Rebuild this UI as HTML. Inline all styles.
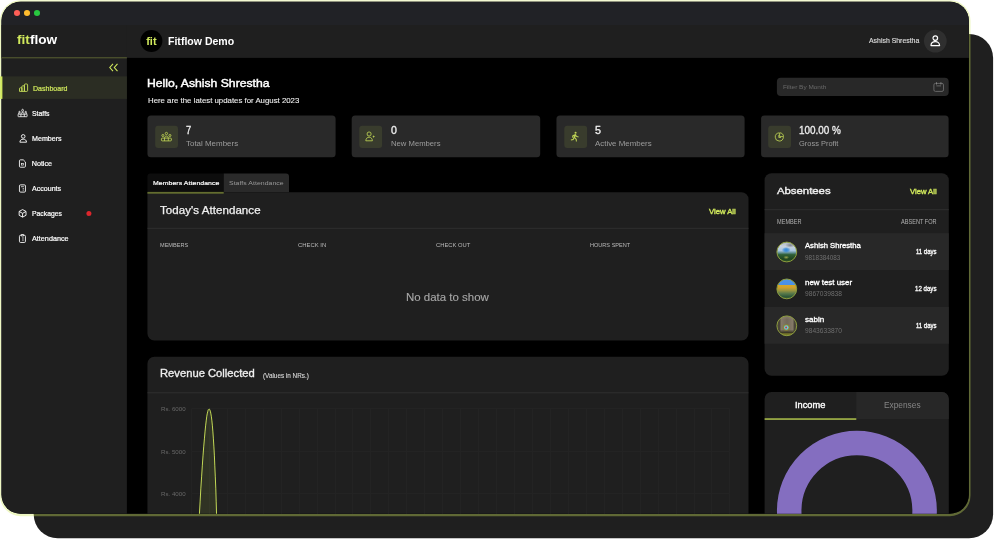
<!DOCTYPE html>
<html lang="en"><head><meta charset="utf-8"><title>Fitflow Demo</title>
<style>
*{box-sizing:border-box;margin:0;padding:0}
html,body{width:994px;height:539px;overflow:hidden;background:#fff}
body{position:relative;font-family:"Liberation Sans",sans-serif}
#art{position:absolute;left:0;top:0;display:block}
.t{position:absolute;white-space:nowrap;line-height:1;display:block;transform-origin:0 50%}
#texts{position:absolute;left:0;top:0;width:969px;height:514px;overflow:hidden;will-change:transform}

</style></head>
<body>
<svg id="art" width="994" height="539" viewBox="0 0 994 539" fill="none">
<defs>
<clipPath id="wc"><rect x="1.50" y="1.70" width="967.40" height="512.10" rx="19.20"/></clipPath>
<linearGradient id="a1" x1="0" y1="0" x2="0" y2="1"><stop offset="0" stop-color="#a9b0ba"/><stop offset=".24" stop-color="#c9d2dc"/><stop offset=".44" stop-color="#a8c6e0"/><stop offset=".54" stop-color="#5f8e90"/><stop offset=".62" stop-color="#2f5f36"/><stop offset=".82" stop-color="#1f4420"/><stop offset="1" stop-color="#3a6228"/></linearGradient>
<radialGradient id="a1b"><stop offset="0" stop-color="#2e86d8"/><stop offset=".5" stop-color="#2e86d8" stop-opacity=".7"/><stop offset="1" stop-color="#2e86d8" stop-opacity="0"/></radialGradient>
<radialGradient id="a1c"><stop offset="0" stop-color="#7d828c"/><stop offset="1" stop-color="#7d828c" stop-opacity="0"/></radialGradient>
<radialGradient id="a1d"><stop offset="0" stop-color="#96a24a"/><stop offset="1" stop-color="#96a24a" stop-opacity="0"/></radialGradient>
<linearGradient id="a2" x1="0" y1="0" x2="0" y2="1"><stop offset="0" stop-color="#4c93e9"/><stop offset=".29" stop-color="#4a90e6"/><stop offset=".32" stop-color="#d6a82a"/><stop offset=".44" stop-color="#cfa02c"/><stop offset=".58" stop-color="#9a9440"/><stop offset=".72" stop-color="#5a7a4a"/><stop offset=".88" stop-color="#2e583a"/><stop offset="1" stop-color="#44602c"/></linearGradient>
<linearGradient id="a3" x1="0" y1="0" x2="1" y2="0"><stop offset="0" stop-color="#4b4639"/><stop offset=".16" stop-color="#4b4639"/><stop offset=".24" stop-color="#857a68"/><stop offset=".5" stop-color="#73695a"/><stop offset=".76" stop-color="#857a68"/><stop offset=".84" stop-color="#4b4639"/><stop offset="1" stop-color="#4b4639"/></linearGradient>
<linearGradient id="a3b" x1="0" y1="0" x2="0" y2="1"><stop offset="0" stop-color="#a09482" stop-opacity=".5"/><stop offset=".2" stop-color="#a09482" stop-opacity="0"/><stop offset=".66" stop-color="#34321e" stop-opacity="0"/><stop offset=".8" stop-color="#34321e" stop-opacity=".9"/><stop offset=".86" stop-color="#7e7e2a"/><stop offset=".93" stop-color="#6a6a26"/><stop offset="1" stop-color="#3a3820"/></linearGradient>
<clipPath id="c1"><circle cx="786.8" cy="252" r="9.9"/></clipPath><clipPath id="c2"><circle cx="786.8" cy="288.9" r="9.9"/></clipPath><clipPath id="c3"><circle cx="786.8" cy="325.8" r="9.9"/></clipPath>
</defs>
<rect x="33.70" y="34.00" width="959.40" height="504.35" rx="24.00" fill="#1f1f1f"/>
<path fill-rule="evenodd" fill="#d0e85c" fill-opacity=".37" d="M20.60 0.20H949.90a20.60 20.60 0 0 1 20.60 20.60V495.55a20.60 20.60 0 0 1 -20.60 20.60H20.60a20.60 20.60 0 0 1 -20.60 -20.60V20.80a20.60 20.60 0 0 1 20.60 -20.60ZM20.70 1.70H949.70a19.20 19.20 0 0 1 19.20 19.20V494.60a19.20 19.20 0 0 1 -19.20 19.20H20.70a19.20 19.20 0 0 1 -19.20 -19.20V20.90a19.20 19.20 0 0 1 19.20 -19.20Z"/>
<g clip-path="url(#wc)">
<rect x="0.00" y="0.00" width="971.00" height="517.00" rx="0.00" fill="#000"/>
<rect x="0.00" y="0.00" width="971.00" height="25.00" rx="0.00" fill="#212226"/>
<rect x="0.00" y="25.00" width="971.00" height="32.90" rx="0.00" fill="#1f1f1f"/>
<rect x="0.00" y="25.00" width="126.90" height="492.00" rx="0.00" fill="#1f1f1f"/>
<rect x="0.00" y="57.30" width="126.90" height="1.00" rx="0.00" fill="#5a6133"/>
<rect x="0.00" y="76.40" width="126.90" height="22.50" rx="0.00" fill="#2b2d23"/>
<circle cx="17.0" cy="13" r="3.05" fill="#fe5f57"/>
<circle cx="27.0" cy="13" r="3.05" fill="#febc2e"/>
<circle cx="37.0" cy="13" r="3.05" fill="#28c840"/>
<circle cx="151.4" cy="41.05" r="11" fill="#000"/>
<circle cx="935.3" cy="41.1" r="11.4" fill="#2f2f2f"/>
<g transform="translate(929.80 34.80)" stroke="#fff" stroke-width="1.200"><circle cx="5.5" cy="3.3" r="2.3"/><path d="M1.2 10.8c0-2.600 1.900-4 4.300-4s4.300 1.400 4.300 4z" stroke-linejoin="round"/></g>
<g transform="translate(109.00 63.40)" stroke="#d0e85c" stroke-width="1.100"><path d="M4 .5L.8 4.100 4 7.700M8.500 .5L5.300 4.100 8.500 7.700"/></g>
<g transform="translate(19.00 83.50)" stroke="#d0e85c" stroke-width=".85" stroke-linejoin="round"><path d="M.5 7.900V5.100c0-.5.300-.8.800-.8h1.600v3.600zM2.900 7.900V3.100c0-.5.300-.8.800-.8h1.700v5.600zM5.400 7.900V1.300c0-.5.300-.8.800-.8h1.600c.5 0 .8.300.8.800v5.800c0 .5-.3.800-.8.800z"/></g>
<g transform="translate(17.60 108.80)" stroke="#fff" stroke-width=".8"><ellipse cx="5" cy="1.700" rx=".85" ry="1.250"/><circle cx="1.900" cy="3.300" r=".75"/><circle cx="8.100" cy="3.300" r=".75"/><path d="M3.500 5.300c0-1.100.6-1.700 1.500-1.700s1.500.6 1.500 1.700M.6 5.300c0-.6.5-1 1.300-1M9.400 5.300c0-.6-.5-1-1.300-1"/><rect x=".5" y="5.400" width="9" height="2.500" rx=".4"/><path d="M3.300 5.400v2.500M6.700 5.400v2.500"/></g>
<g transform="translate(19.20 134.00)" stroke="#fff" stroke-width=".9"><circle cx="4" cy="2.400" r="1.800"/><path d="M.7 8.200c0-2 1.400-3 3.300-3s3.300 1 3.300 3z" stroke-linejoin="round"/></g>
<g transform="translate(18.90 159.30) scale(0.910 0.930)" stroke="#fff" stroke-width=".95"><path d="M1.600.6h3.200l2.400 2.300v4.600c0 .6-.4 1-1 1H1.600c-.6 0-1-.4-1-1V1.600c0-.6.400-1 1-1z"/><rect x="2.700" y="4.400" width="2.200" height="1.800" stroke-width=".7"/></g>
<g transform="translate(18.90 184.30) scale(0.910 0.930)" stroke="#fff" stroke-width=".95"><rect x=".6" y=".6" width="6.600" height="7.800" rx="1.200"/><path d="M2.300 2.600h3.200M4.100 4.600h1.400M4.100 6.200h1.400" stroke-width=".8"/></g>
<g transform="translate(18.40 209.00) scale(0.930 0.970)" stroke="#fff" stroke-width=".95" stroke-linejoin="round"><path d="M4.500.6L8.200 2.500v4L4.500 8.400.8 6.500v-4z"/><path d="M.9 2.600L4.500 4.500l3.600-1.900M4.500 4.500v3.800"/></g>
<g transform="translate(18.90 233.90) scale(0.910 0.930)" stroke="#fff" stroke-width=".95"><rect x=".6" y="1.500" width="6.600" height="7.700" rx="1.200"/><path d="M2.600.7h2.600v1.500H2.600z" fill="#1f1f1f"/><path d="M3.400 4.400h2M3.400 6.600h2" stroke-width=".8"/></g>
<circle cx="88.9" cy="213.5" r="2.500" fill="#dc262c"/>
<rect x="776.90" y="77.70" width="171.80" height="18.30" rx="4.00" fill="#282828"/>
<g transform="translate(933.30 82.00)" stroke="#6c6c6c" stroke-width=".9"><rect x=".6" y="1.400" width="9.600" height="8" rx="1.500"/><path d="M3.200 .3v2.200M7.600 .3v2.200" stroke="#8a8a8a"/><path d="M3 3.900h4.800"/></g>
<rect x="147.45" y="115.55" width="188.15" height="41.65" rx="3.50" fill="#292929"/>
<rect x="351.70" y="115.55" width="188.50" height="41.65" rx="3.50" fill="#292929"/>
<rect x="556.45" y="115.55" width="188.15" height="41.65" rx="3.50" fill="#292929"/>
<rect x="761.10" y="115.55" width="187.50" height="41.65" rx="3.50" fill="#292929"/>
<rect x="155.20" y="125.75" width="22.80" height="22.20" rx="3.00" fill="#393c2d"/>
<rect x="359.30" y="125.75" width="22.80" height="22.20" rx="3.00" fill="#393c2d"/>
<rect x="564.30" y="125.75" width="22.80" height="22.20" rx="3.00" fill="#393c2d"/>
<rect x="768.20" y="125.75" width="22.80" height="22.20" rx="3.00" fill="#393c2d"/>
<g transform="translate(160.90 131.80)" stroke="#bdd254" stroke-width=".85"><circle cx="5.500" cy="1.700" r="1.150"/><circle cx="2" cy="3.700" r="1.050"/><circle cx="9" cy="3.700" r="1.050"/><path d="M3.700 6.300c0-1.300.7-2 1.800-2s1.800.7 1.800 2"/><rect x=".5" y="6.300" width="10" height="2.800" rx=".9"/><path d="M3.600 6.300v2.800M7.400 6.300v2.800"/></g>
<g transform="translate(365.30 131.40)" stroke="#bdd254" stroke-width=".85"><circle cx="3.800" cy="2.600" r="2.050"/><path d="M.5 9.400c.1-2.300 1.500-3.600 3.300-3.600s3.200 1.300 3.300 3.600z" stroke-linejoin="round"/><path d="M8.400 3.500c.2 1.100.6 1.500 1.700 1.700-1.100.2-1.500.6-1.700 1.700-.2-1.100-.6-1.500-1.700-1.700 1.100-.2 1.500-.6 1.700-1.700z" fill="#bdd254" stroke="none"/></g>
<g transform="translate(570.60 131.50)" fill="#bdd254"><circle cx="5" cy="1.200" r="1.050"/><path d="M1.900 3.800L4.300 2.700c.5-.2 1 0 1.300.5l.6 1.200 1.900.6-.3.900-2.300-.7-.4-.7-.5 1.600 1.500 1.300.2 2.500h-1l-.2-2-1.500-1.200-.6 1.700-2.600.5-.2-.9 2.100-.4.900-3.100-.8.400-.2 1.300-.9-.1z"/></g>
<g transform="translate(774.50 131.90)" stroke="#bdd254" stroke-width=".85"><path d="M4.200 1A4.100 4.100 0 1 0 8.900 5.600" stroke-linecap="round"/><path d="M5.100 .9A3.700 3.700 0 0 1 9 4.700H5.100z" stroke-linejoin="round"/><path d="M4.300 3v2.600h2.200" stroke-width=".8"/></g>
<path d="M150.45 173.40H223.70V193.80H147.45V176.40a3.00 3.00 0 0 1 3.00 -3.00Z" fill="#0d0d0d"/>
<path d="M223.70 173.40H286.00a3.00 3.00 0 0 1 3.00 3.00V192.30H223.70V173.40Z" fill="#2a2a2a"/>
<path d="M147.45 192.20H741.50a7.00 7.00 0 0 1 7.00 7.00V333.45a7.00 7.00 0 0 1 -7.00 7.00H154.45a7.00 7.00 0 0 1 -7.00 -7.00V192.20Z" fill="#1f1f1f"/>
<rect x="147.45" y="191.90" width="76.25" height="1.80" rx="0.00" fill="#636d2f"/>
<rect x="147.45" y="227.80" width="601.05" height="1.00" rx="0.00" fill="#2f2f2f"/>
<path d="M154.45 356.80H741.50a7.00 7.00 0 0 1 7.00 7.00V560.00H147.45V363.80a7.00 7.00 0 0 1 7.00 -7.00Z" fill="#1f1f1f"/>
<rect x="147.45" y="392.30" width="601.05" height="1.00" rx="0.00" fill="#2f2f2f"/>
<path d="M191.5 409V520M209.5 409V520M227.5 409V520M245.5 409V520M263.5 409V520M281.5 409V520M299.5 409V520M317.5 409V520M335.5 409V520M352.5 409V520M370.5 409V520M388.5 409V520M406.5 409V520M424.5 409V520M442.5 409V520M460.5 409V520M478.5 409V520M496.5 409V520M514.5 409V520M532.5 409V520M550.5 409V520M568.5 409V520M586.5 409V520M604.5 409V520M622.5 409V520M640.5 409V520M658.5 409V520M676.5 409V520M694.5 409V520M711.5 409V520M729.5 409V520M191.4 408.5H729.9M191.4 451.5H729.9M191.4 493.5H729.9" stroke="#232323" stroke-width="1"/>
<path d="M198.6 528.9 199.3 515.9 200.1 501.9 200.8 488.9 201.6 476.9 202.3 465.9 203.0 455.9 203.7 446.9 204.4 438.9 205.0 431.9 205.6 425.9 206.2 420.9 206.7 416.9 207.2 413.9 207.7 411.9 207.9 410.9 208.2 409.9 208.5 409.4 209.0 408.9 209.6 409.4 209.9 409.9 210.2 410.9 210.5 411.9 210.9 413.9 211.4 416.9 211.9 420.9 212.4 425.9 212.9 431.9 213.4 438.9 213.9 446.9 214.4 455.9 214.8 465.9 215.3 476.9 215.8 488.9 216.2 501.9 216.6 515.9 217.0 528.9" fill="#d0e85c" fill-opacity=".1" stroke="#c2d856" stroke-width="1" stroke-linejoin="round"/>
<rect x="764.60" y="173.20" width="184.20" height="202.60" rx="7.00" fill="#1f1f1f"/>
<rect x="764.60" y="209.20" width="184.20" height="1.00" rx="0.00" fill="#2f2f2f"/>
<rect x="764.60" y="233.20" width="184.20" height="36.85" rx="0.00" fill="#282828"/>
<rect x="764.60" y="306.90" width="184.20" height="36.85" rx="0.00" fill="#282828"/>
<g clip-path="url(#c1)"><rect x="776" y="241" width="22" height="22" fill="url(#a1)"/><ellipse cx="786.2" cy="250" rx="4.500" ry="3" fill="url(#a1b)"/><ellipse cx="790.2" cy="245.2" rx="5" ry="2.500" fill="url(#a1c)"/><ellipse cx="786.2" cy="257.4" rx="3" ry="1.800" fill="url(#a1d)"/></g>
<g clip-path="url(#c2)"><rect x="776" y="278.700" width="22" height="20.400" fill="url(#a2)"/></g>
<g clip-path="url(#c3)"><rect x="776" y="315" width="22" height="22" fill="url(#a3)"/><rect x="776" y="315" width="22" height="22" fill="url(#a3b)"/><circle cx="786.300" cy="327.500" r="3.300" fill="#8c8632"/><circle cx="786.300" cy="327.500" r="2.300" fill="#70c8da"/><circle cx="786.100" cy="327.500" r=".9" fill="#dc3030"/></g>
<circle cx="786.800" cy="252.0" r="9.900" stroke="#8d9d3e" stroke-width="1"/>
<circle cx="786.800" cy="288.9" r="9.900" stroke="#8d9d3e" stroke-width="1"/>
<circle cx="786.800" cy="325.8" r="9.900" stroke="#8d9d3e" stroke-width="1"/>
<path d="M771.60 392.00H941.80a7.00 7.00 0 0 1 7.00 7.00V560.00H764.60V399.00a7.00 7.00 0 0 1 7.00 -7.00Z" fill="#1f1f1f"/>
<path d="M856.30 392.00H941.80a7.00 7.00 0 0 1 7.00 7.00V419.00H856.30V392.00Z" fill="#272727"/>
<rect x="764.60" y="418.30" width="91.70" height="1.50" rx="0.00" fill="#aec24c"/>
<circle cx="856.900" cy="510.800" r="67.700" stroke="#846ec0" stroke-width="24.500"/>
</g>
<rect x="0.20" y="76.40" width="2.20" height="22.50" rx="0.00" fill="#d0e85c"/>
</svg>

<div id="texts">
<span class="t" style="left:16.6px;top:33.0px;font-size:13.6px;font-weight:700;color:#fff;transform:scaleX(1.004);"><b style="color:#d0e85c;font-weight:inherit">fit</b>flow</span>
<span class="t" style="left:146.2px;top:36.0px;font-size:11.0px;font-weight:700;color:#d0e85c;">fit</span>
<span class="t" style="left:167.9px;top:36.0px;font-size:10.5px;font-weight:700;color:#fff;transform:scaleX(1.004);">Fitflow Demo</span>
<span class="t" style="left:869.3px;top:38.0px;font-size:6.5px;font-weight:400;color:#dcdcdc;transform:scaleX(1.062);-webkit-text-stroke:0.15px #dcdcdc;">Ashish Shrestha</span>
<span class="t" style="left:32.8px;top:85.0px;font-size:7.2px;font-weight:400;color:#d0e85c;transform:scaleX(0.978);-webkit-text-stroke:0.20px #d0e85c;">Dashboard</span>
<span class="t" style="left:31.5px;top:110.0px;font-size:7.2px;font-weight:400;color:#fff;transform:scaleX(0.959);-webkit-text-stroke:0.20px #fff;">Staffs</span>
<span class="t" style="left:31.5px;top:135.0px;font-size:7.2px;font-weight:400;color:#fff;transform:scaleX(0.991);-webkit-text-stroke:0.20px #fff;">Members</span>
<span class="t" style="left:31.7px;top:160.0px;font-size:7.2px;font-weight:400;color:#fff;-webkit-text-stroke:0.20px #fff;">Notice</span>
<span class="t" style="left:31.5px;top:185.0px;font-size:7.2px;font-weight:400;color:#fff;transform:scaleX(0.984);-webkit-text-stroke:0.20px #fff;">Accounts</span>
<span class="t" style="left:31.7px;top:210.0px;font-size:7.2px;font-weight:400;color:#fff;transform:scaleX(0.947);-webkit-text-stroke:0.20px #fff;">Packages</span>
<span class="t" style="left:31.5px;top:235.0px;font-size:7.2px;font-weight:400;color:#fff;transform:scaleX(1.006);-webkit-text-stroke:0.20px #fff;">Attendance</span>
<span class="t" style="left:146.9px;top:78.0px;font-size:10.7px;font-weight:400;color:#fff;transform:scaleX(1.139);-webkit-text-stroke:0.42px #fff;">Hello, Ashish Shrestha</span>
<span class="t" style="left:147.7px;top:98.0px;font-size:6.9px;font-weight:400;color:#ececec;transform:scaleX(1.135);-webkit-text-stroke:0.10px #ececec;">Here are the latest updates for August 2023</span>
<span class="t" style="left:782.7px;top:84.0px;font-size:6.0px;font-weight:400;color:#6a6a6a;transform:scaleX(1.073);">Filter By Month</span>
<span class="t" style="left:152.5px;top:180.0px;font-size:6.0px;font-weight:400;color:#fff;letter-spacing:0.06px;transform:scaleX(1.150);-webkit-text-stroke:0.18px #fff;">Members Attendance</span>
<span class="t" style="left:229.1px;top:180.0px;font-size:6.0px;font-weight:400;color:#9a9a9a;letter-spacing:0.04px;transform:scaleX(1.150);">Staffs Attendance</span>
<span class="t" style="left:160.1px;top:206.0px;font-size:10.0px;font-weight:400;color:#f0f0f0;letter-spacing:0.06px;transform:scaleX(1.150);-webkit-text-stroke:0.25px #f0f0f0;">Today's Attendance</span>
<span class="t" style="left:709.3px;top:209.0px;font-size:7.1px;font-weight:400;color:#d0e85c;transform:scaleX(1.084);-webkit-text-stroke:0.35px #d0e85c;">View All</span>
<span class="t" style="left:159.7px;top:243.0px;font-size:5.9px;font-weight:400;color:#bababa;transform:scaleX(0.946);">MEMBERS</span>
<span class="t" style="left:298.0px;top:243.0px;font-size:5.9px;font-weight:400;color:#bababa;">CHECK IN</span>
<span class="t" style="left:435.7px;top:243.0px;font-size:5.9px;font-weight:400;color:#bababa;transform:scaleX(0.986);">CHECK OUT</span>
<span class="t" style="left:590.2px;top:243.0px;font-size:5.9px;font-weight:400;color:#bababa;transform:scaleX(0.944);">HOURS SPENT</span>
<span class="t" style="left:406.4px;top:293.0px;font-size:10.0px;font-weight:400;color:#a8a8a8;transform:scaleX(1.147);-webkit-text-stroke:0.10px #a8a8a8;">No data to show</span>
<span class="t" style="left:159.7px;top:369.0px;font-size:10.1px;font-weight:400;color:#f0f0f0;transform:scaleX(1.111);-webkit-text-stroke:0.30px #f0f0f0;">Revenue Collected</span>
<span class="t" style="left:262.7px;top:373.0px;font-size:6.5px;font-weight:400;color:#dadada;transform:scaleX(0.980);-webkit-text-stroke:0.10px #dadada;">(Values in NRs.)</span>
<span class="t" style="left:160.7px;top:406.0px;font-size:6.0px;font-weight:400;color:#686868;transform:scaleX(1.024);">Rs. 6000</span>
<span class="t" style="left:160.7px;top:449.0px;font-size:6.0px;font-weight:400;color:#686868;transform:scaleX(1.024);">Rs. 5000</span>
<span class="t" style="left:160.7px;top:491.0px;font-size:6.0px;font-weight:400;color:#686868;transform:scaleX(1.024);">Rs. 4000</span>
<span class="t" style="left:776.7px;top:186.0px;font-size:9.9px;font-weight:400;color:#f0f0f0;transform:scaleX(1.148);-webkit-text-stroke:0.40px #f0f0f0;">Absentees</span>
<span class="t" style="left:909.9px;top:189.0px;font-size:7.1px;font-weight:400;color:#d0e85c;transform:scaleX(1.076);-webkit-text-stroke:0.35px #d0e85c;">View All</span>
<span class="t" style="left:776.5px;top:219.0px;font-size:6.5px;font-weight:400;color:#b2b2b2;transform:scaleX(0.859);">MEMBER</span>
<span class="t" style="left:900.9px;top:219.0px;font-size:6.5px;font-weight:400;color:#b2b2b2;transform:scaleX(0.859);">ABSENT FOR</span>
<span class="t" style="left:804.8px;top:242.0px;font-size:7.0px;font-weight:400;color:#fff;transform:scaleX(1.094);-webkit-text-stroke:0.30px #fff;">Ashish Shrestha</span>
<span class="t" style="left:804.8px;top:255.0px;font-size:6.3px;font-weight:400;color:#6e6e6e;transform:scaleX(1.011);">9818384083</span>
<span class="t" style="left:916.1px;top:249.0px;font-size:6.8px;font-weight:400;color:#fff;transform:scaleX(0.875);-webkit-text-stroke:0.30px #fff;">11 days</span>
<span class="t" style="left:804.8px;top:279.0px;font-size:7.0px;font-weight:400;color:#fff;transform:scaleX(1.131);-webkit-text-stroke:0.30px #fff;">new test user</span>
<span class="t" style="left:804.8px;top:291.0px;font-size:6.3px;font-weight:400;color:#6e6e6e;transform:scaleX(1.056);">9867039838</span>
<span class="t" style="left:915.0px;top:286.0px;font-size:6.8px;font-weight:400;color:#fff;transform:scaleX(0.903);-webkit-text-stroke:0.30px #fff;">12 days</span>
<span class="t" style="left:804.8px;top:316.0px;font-size:7.0px;font-weight:400;color:#fff;transform:scaleX(1.147);-webkit-text-stroke:0.30px #fff;">sabin</span>
<span class="t" style="left:804.8px;top:328.0px;font-size:6.3px;font-weight:400;color:#6e6e6e;transform:scaleX(1.056);">9843633870</span>
<span class="t" style="left:916.1px;top:323.1px;font-size:6.8px;font-weight:400;color:#fff;transform:scaleX(0.875);-webkit-text-stroke:0.30px #fff;">11 days</span>
<span class="t" style="left:795.3px;top:401.0px;font-size:8.7px;font-weight:400;color:#fff;transform:scaleX(1.063);-webkit-text-stroke:0.35px #fff;">Income</span>
<span class="t" style="left:884.1px;top:401.0px;font-size:8.7px;font-weight:400;color:#868686;transform:scaleX(0.959);">Expenses</span>
<span class="t" style="left:186.3px;top:125.0px;font-size:10.7px;font-weight:400;color:#f0f0f0;transform:scaleX(0.873);-webkit-text-stroke:0.30px #f0f0f0;">7</span>
<span class="t" style="left:186.1px;top:140.0px;font-size:7.3px;font-weight:400;color:#9c9c9c;transform:scaleX(1.089);">Total Members</span>
<span class="t" style="left:390.5px;top:125.0px;font-size:10.7px;font-weight:400;color:#f0f0f0;transform:scaleX(0.991);-webkit-text-stroke:0.30px #f0f0f0;">0</span>
<span class="t" style="left:390.5px;top:140.0px;font-size:7.3px;font-weight:400;color:#9c9c9c;transform:scaleX(1.052);">New Members</span>
<span class="t" style="left:594.8px;top:125.0px;font-size:10.7px;font-weight:400;color:#f0f0f0;transform:scaleX(1.008);-webkit-text-stroke:0.30px #f0f0f0;">5</span>
<span class="t" style="left:594.6px;top:140.0px;font-size:7.3px;font-weight:400;color:#9c9c9c;transform:scaleX(1.082);">Active Members</span>
<span class="t" style="left:799.1px;top:125.0px;font-size:10.7px;font-weight:400;color:#f0f0f0;transform:scaleX(0.928);-webkit-text-stroke:0.30px #f0f0f0;">100.00 %</span>
<span class="t" style="left:799.1px;top:140.0px;font-size:7.3px;font-weight:400;color:#9c9c9c;transform:scaleX(1.023);">Gross Profit</span>
</div>
</body></html>
